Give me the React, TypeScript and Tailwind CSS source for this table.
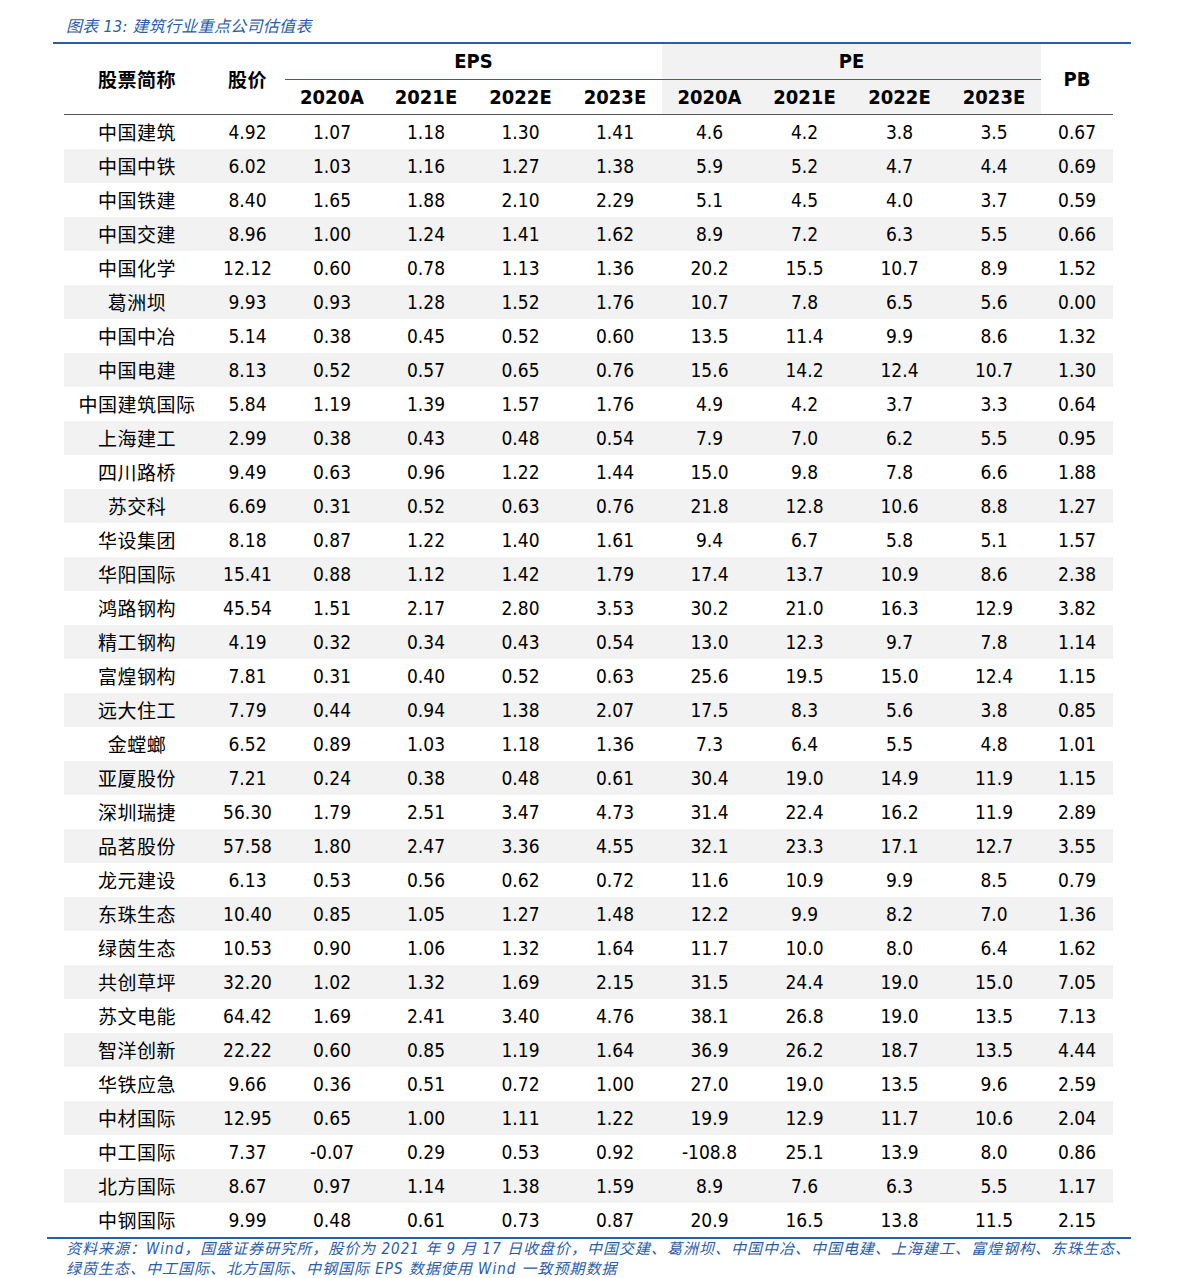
import React from 'react';

const rows: [string, ...string[]][] = [
  ['中国建筑', '4.92', '1.07', '1.18', '1.30', '1.41', '4.6', '4.2', '3.8', '3.5', '0.67'],
  ['中国中铁', '6.02', '1.03', '1.16', '1.27', '1.38', '5.9', '5.2', '4.7', '4.4', '0.69'],
  ['中国铁建', '8.40', '1.65', '1.88', '2.10', '2.29', '5.1', '4.5', '4.0', '3.7', '0.59'],
  ['中国交建', '8.96', '1.00', '1.24', '1.41', '1.62', '8.9', '7.2', '6.3', '5.5', '0.66'],
  ['中国化学', '12.12', '0.60', '0.78', '1.13', '1.36', '20.2', '15.5', '10.7', '8.9', '1.52'],
  ['葛洲坝', '9.93', '0.93', '1.28', '1.52', '1.76', '10.7', '7.8', '6.5', '5.6', '0.00'],
  ['中国中冶', '5.14', '0.38', '0.45', '0.52', '0.60', '13.5', '11.4', '9.9', '8.6', '1.32'],
  ['中国电建', '8.13', '0.52', '0.57', '0.65', '0.76', '15.6', '14.2', '12.4', '10.7', '1.30'],
  ['中国建筑国际', '5.84', '1.19', '1.39', '1.57', '1.76', '4.9', '4.2', '3.7', '3.3', '0.64'],
  ['上海建工', '2.99', '0.38', '0.43', '0.48', '0.54', '7.9', '7.0', '6.2', '5.5', '0.95'],
  ['四川路桥', '9.49', '0.63', '0.96', '1.22', '1.44', '15.0', '9.8', '7.8', '6.6', '1.88'],
  ['苏交科', '6.69', '0.31', '0.52', '0.63', '0.76', '21.8', '12.8', '10.6', '8.8', '1.27'],
  ['华设集团', '8.18', '0.87', '1.22', '1.40', '1.61', '9.4', '6.7', '5.8', '5.1', '1.57'],
  ['华阳国际', '15.41', '0.88', '1.12', '1.42', '1.79', '17.4', '13.7', '10.9', '8.6', '2.38'],
  ['鸿路钢构', '45.54', '1.51', '2.17', '2.80', '3.53', '30.2', '21.0', '16.3', '12.9', '3.82'],
  ['精工钢构', '4.19', '0.32', '0.34', '0.43', '0.54', '13.0', '12.3', '9.7', '7.8', '1.14'],
  ['富煌钢构', '7.81', '0.31', '0.40', '0.52', '0.63', '25.6', '19.5', '15.0', '12.4', '1.15'],
  ['远大住工', '7.79', '0.44', '0.94', '1.38', '2.07', '17.5', '8.3', '5.6', '3.8', '0.85'],
  ['金螳螂', '6.52', '0.89', '1.03', '1.18', '1.36', '7.3', '6.4', '5.5', '4.8', '1.01'],
  ['亚厦股份', '7.21', '0.24', '0.38', '0.48', '0.61', '30.4', '19.0', '14.9', '11.9', '1.15'],
  ['深圳瑞捷', '56.30', '1.79', '2.51', '3.47', '4.73', '31.4', '22.4', '16.2', '11.9', '2.89'],
  ['品茗股份', '57.58', '1.80', '2.47', '3.36', '4.55', '32.1', '23.3', '17.1', '12.7', '3.55'],
  ['龙元建设', '6.13', '0.53', '0.56', '0.62', '0.72', '11.6', '10.9', '9.9', '8.5', '0.79'],
  ['东珠生态', '10.40', '0.85', '1.05', '1.27', '1.48', '12.2', '9.9', '8.2', '7.0', '1.36'],
  ['绿茵生态', '10.53', '0.90', '1.06', '1.32', '1.64', '11.7', '10.0', '8.0', '6.4', '1.62'],
  ['共创草坪', '32.20', '1.02', '1.32', '1.69', '2.15', '31.5', '24.4', '19.0', '15.0', '7.05'],
  ['苏文电能', '64.42', '1.69', '2.41', '3.40', '4.76', '38.1', '26.8', '19.0', '13.5', '7.13'],
  ['智洋创新', '22.22', '0.60', '0.85', '1.19', '1.64', '36.9', '26.2', '18.7', '13.5', '4.44'],
  ['华铁应急', '9.66', '0.36', '0.51', '0.72', '1.00', '27.0', '19.0', '13.5', '9.6', '2.59'],
  ['中材国际', '12.95', '0.65', '1.00', '1.11', '1.22', '19.9', '12.9', '11.7', '10.6', '2.04'],
  ['中工国际', '7.37', '-0.07', '0.29', '0.53', '0.92', '-108.8', '25.1', '13.9', '8.0', '0.86'],
  ['北方国际', '8.67', '0.97', '1.14', '1.38', '1.59', '8.9', '7.6', '6.3', '5.5', '1.17'],
  ['中钢国际', '9.99', '0.48', '0.61', '0.73', '0.87', '20.9', '16.5', '13.8', '11.5', '2.15'],
];

const years = ['2020A', '2021E', '2022E', '2023E'];

// number font: DejaVu Sans Condensed is close to Tahoma at this size
const num = "font-['DejaVu_Sans_Condensed','DejaVu_Sans','Noto_Sans_CJK_SC',sans-serif] font-stretch-condensed";
const cjk = "font-['Noto_Sans_CJK_SC',sans-serif]";
const headNum = `p-0 text-[20px] font-bold ${num}`;
const cellNum = `p-0 text-center text-[19px] leading-[34px] ${num}`;
const cellName = `p-0 text-center text-[19px] leading-[34px] tracking-[0.5px] whitespace-nowrap ${cjk}`;

export default function App() {
  return (
    <div className="w-[1191px] h-[1278px] bg-white text-black">
      <div className={`pt-[16px] pl-[66px] h-[42px] text-[16px] leading-[22px] tracking-[0.3px] italic text-[#2a5caa] ${num}`}>
        图表 13: 建筑行业重点公司估值表
      </div>
      <div className="ml-[53px] w-[1078px] h-[2px] bg-[#2a5caa]" />

      <table className="ml-[64px] w-[1049px] table-fixed border-collapse">
        <colgroup>
          <col className="w-[146px]" />
          <col className="w-[75px]" />
          <col className="w-[94px]" />
          <col className="w-[94px]" />
          <col className="w-[95px]" />
          <col className="w-[94px]" />
          <col className="w-[95px]" />
          <col className="w-[95px]" />
          <col className="w-[95px]" />
          <col className="w-[94px]" />
          <col className="w-[72px]" />
        </colgroup>
        <thead>
          <tr className="h-[35px]">
            <th rowSpan={2} className={`p-0 text-[19px] font-bold tracking-[0.5px] border-b border-[#555] ${cjk}`}>
              股票简称
            </th>
            <th rowSpan={2} className={`p-0 text-[19px] font-bold tracking-[0.5px] border-b border-[#555] ${cjk}`}>
              股价
            </th>
            <th colSpan={4} className={`${headNum} border-b border-[#2f5fb0]`}>
              EPS
            </th>
            <th colSpan={4} className={`${headNum} bg-[#f2f2f2] border-b border-[#2f5fb0]`}>
              PE
            </th>
            <th rowSpan={2} className={`${headNum} border-b border-[#555]`}>
              PB
            </th>
          </tr>
          <tr className="h-[35px]">
            {years.map((y) => (
              <th key={'e' + y} className={`${headNum} border-b border-[#555]`}>
                {y}
              </th>
            ))}
            {years.map((y) => (
              <th key={'p' + y} className={`${headNum} bg-[#f2f2f2] border-b border-[#555]`}>
                {y}
              </th>
            ))}
          </tr>
        </thead>
        <tbody>
          {rows.map((r, i) => (
            <tr key={r[0]} className={i % 2 === 1 ? 'h-[34px] bg-[#f2f2f2]' : 'h-[34px]'}>
              {r.map((c, j) => (
                <td key={j} className={j === 0 ? cellName : cellNum}>
                  {c}
                </td>
              ))}
            </tr>
          ))}
        </tbody>
      </table>

      <div className="ml-[47px] w-[1084px] h-[2px] bg-[#2a5caa]" />
      <div className={`pl-[66px] text-[15px] leading-[20px] tracking-[1px] italic text-[#2a5caa] whitespace-nowrap ${num}`}>
        <div>
          资料来源：Wind，国盛证券研究所，股价为 2021 年 9 月 17 日收盘价，中国交建、葛洲坝、中国中冶、中国电建、上海建工、富煌钢构、东珠生态、
        </div>
        <div>绿茵生态、中工国际、北方国际、中钢国际 EPS 数据使用 Wind 一致预期数据</div>
      </div>
    </div>
  );
}
